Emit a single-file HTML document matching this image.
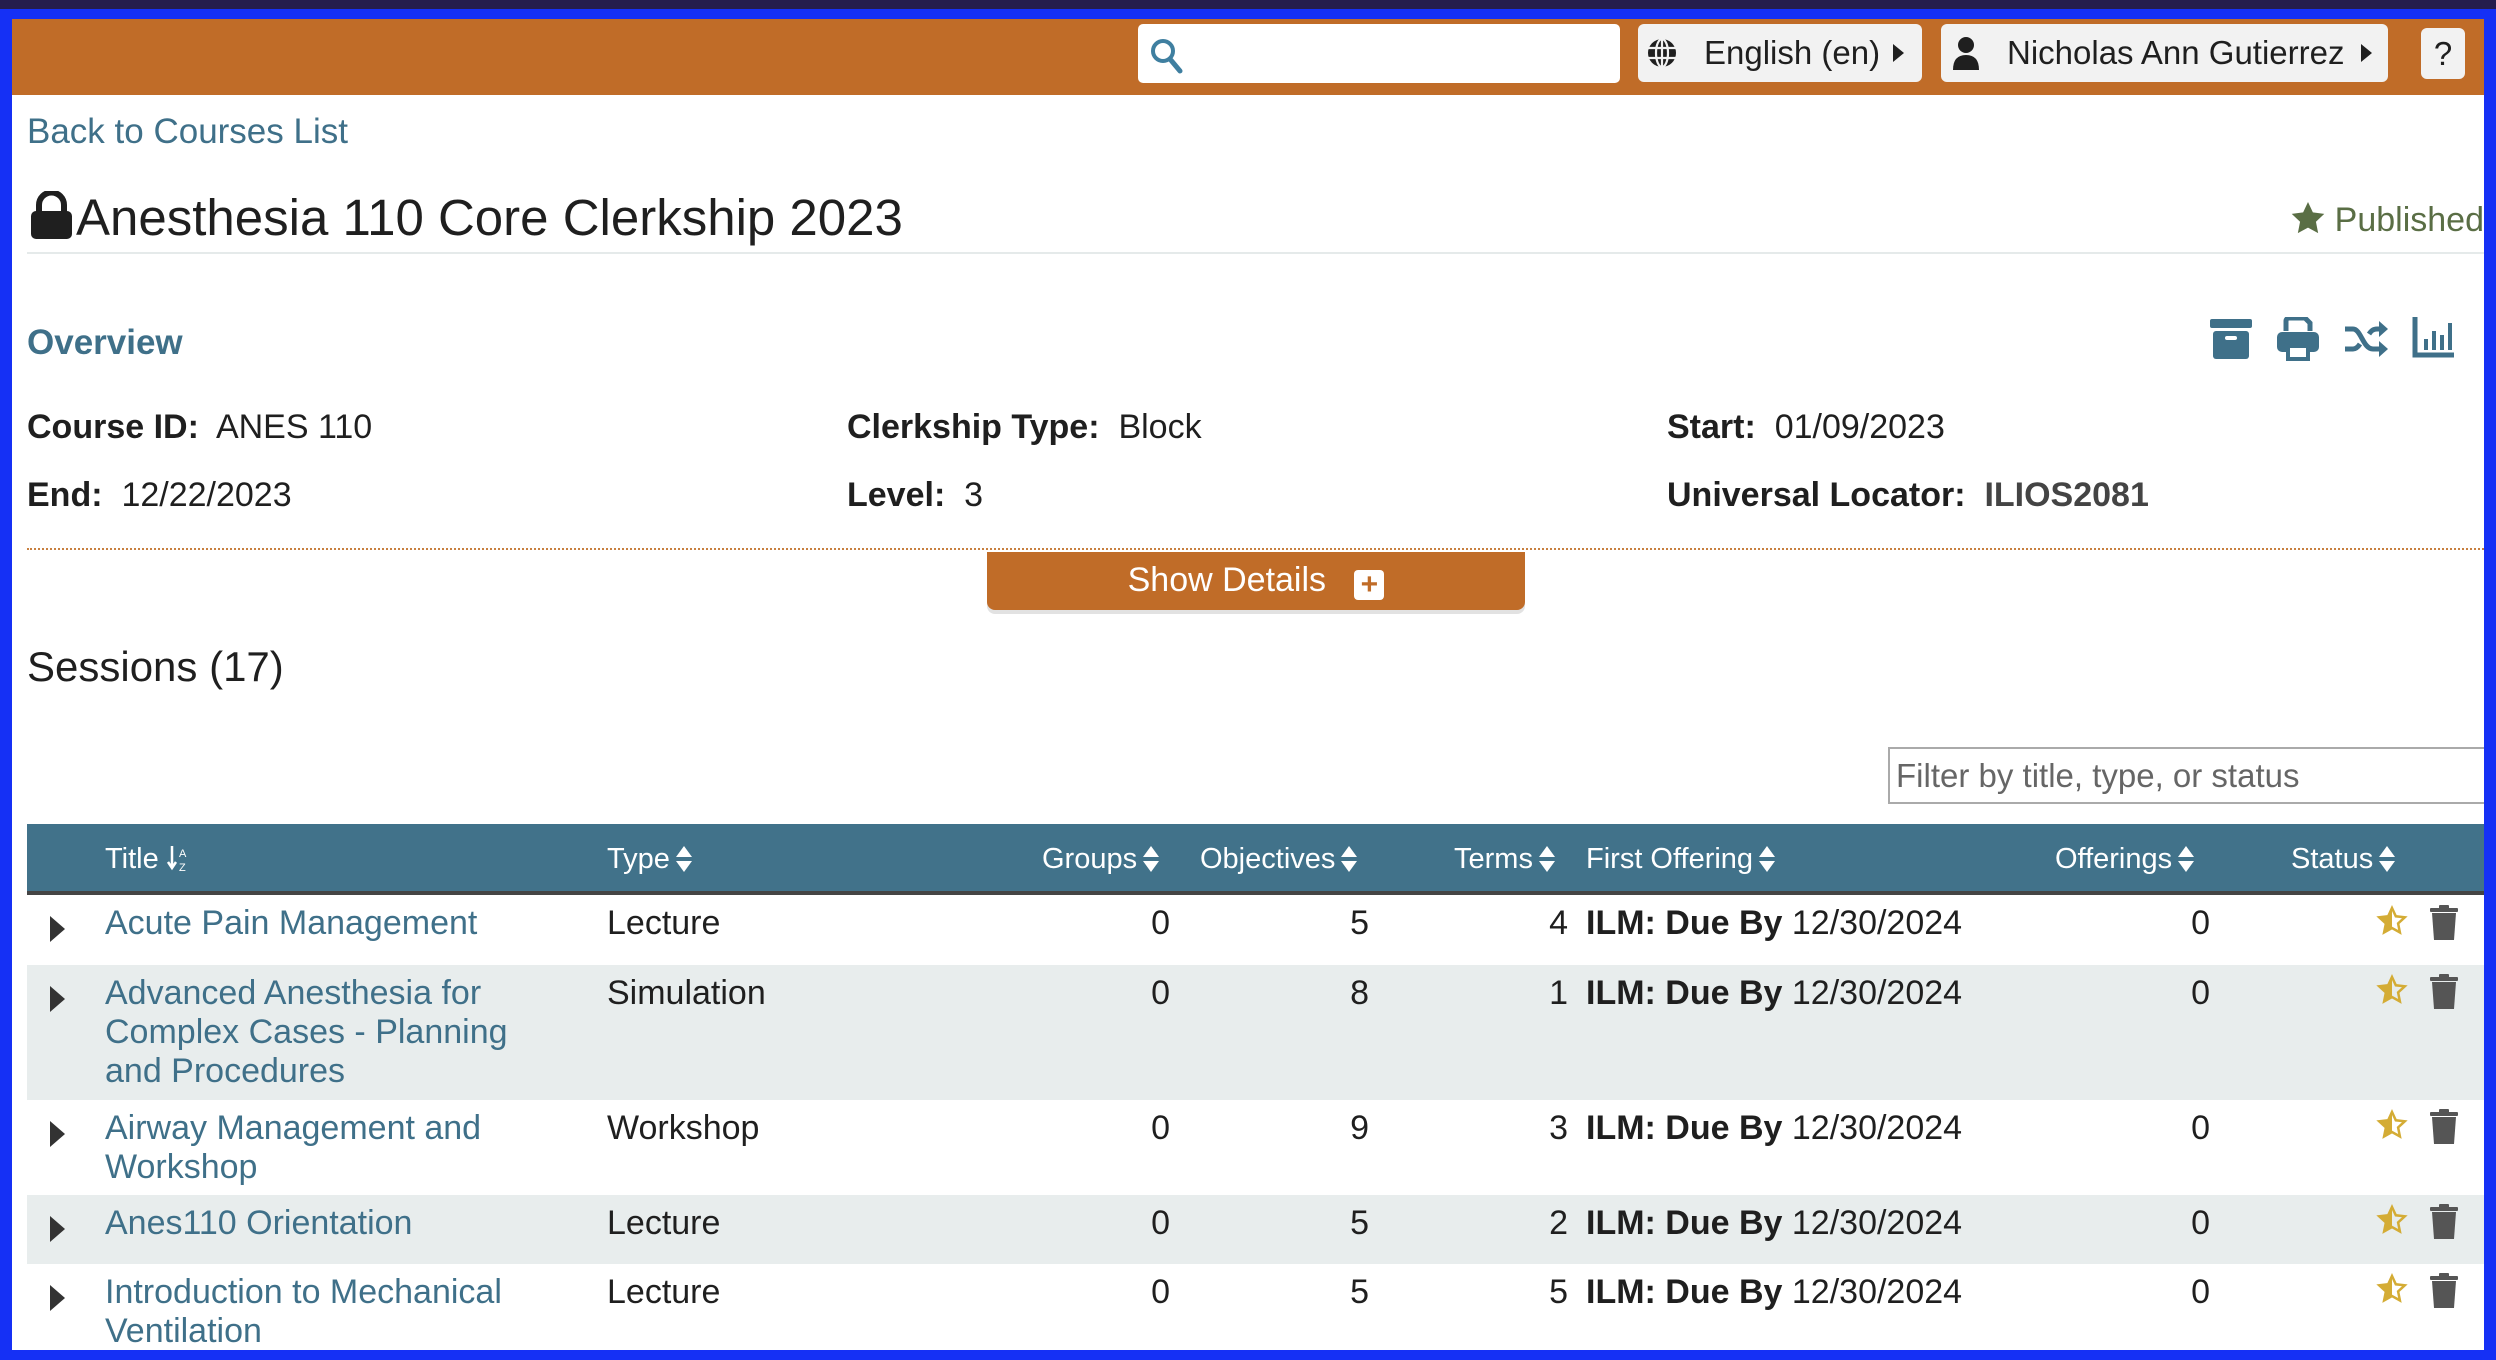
<!DOCTYPE html>
<html><head><meta charset="utf-8"><style>
*{box-sizing:border-box;margin:0;padding:0}
body{width:2496px;height:1360px;overflow:hidden;background:#1530f5;font-family:"Liberation Sans",sans-serif;color:#1f1f1f;position:relative}
.a{position:absolute}
#top{left:0;top:0;width:2496px;height:9px;background:#251d4d}
#page{left:12px;top:19px;width:2472px;height:1331px;background:#fff;overflow:hidden}
#hdr{left:0;top:0;width:2472px;height:76px;background:#c06c28}
.btn{background:#f2f2f2;border-radius:6px;height:58px;top:5px;font-size:33px;line-height:58px;color:#1f1f1f}
.teal{color:#3f7089}
.lbl{font-weight:bold}
.f{font-size:34px;line-height:40px}
.row{position:absolute;left:15px;width:2460px}
.cell{position:absolute;top:9px;font-size:34px;line-height:39px}
.r{text-align:right}
.tri{position:absolute;left:23px;top:21px;width:0;height:0;border-left:15px solid #333;border-top:13px solid transparent;border-bottom:13px solid transparent}
.hc{position:absolute;top:0;line-height:71px;font-size:29px;color:#fff}
.s{display:inline-block;width:16px;height:26px;vertical-align:-4px;margin-left:6px}
</style></head><body>
<svg width="0" height="0" style="position:absolute"><defs><symbol id="so" viewBox="0 0 16 26"><path d="M8 0l8 11H0zM8 26l8-11H0z" fill="#fff"/></symbol></defs></svg>
<div id="top" class="a"></div>
<div id="page" class="a">
 <div id="hdr" class="a">
  <div class="a" style="left:1126px;top:5px;width:482px;height:59px;background:#fff;border-radius:5px">
   <svg class="a" style="left:12px;top:14px" width="34" height="36" viewBox="0 0 34 36"><circle cx="13" cy="13" r="10" fill="none" stroke="#3f7fa0" stroke-width="4"/><line x1="20" y1="21" x2="30" y2="33" stroke="#3f7fa0" stroke-width="5" stroke-linecap="round"/></svg>
  </div>
  <div class="a btn" style="left:1626px;width:284px">
   <svg class="a" style="left:8px;top:13px" width="32" height="32" viewBox="0 0 32 32"><circle cx="16" cy="16" r="14" fill="#1f1f1f"/><g stroke="#f2f2f2" stroke-width="2.2" fill="none"><ellipse cx="16" cy="16" rx="6" ry="14"/><line x1="16" y1="2" x2="16" y2="30"/><line x1="2" y1="11" x2="30" y2="11"/><line x1="2" y1="21" x2="30" y2="21"/></g></svg>
   <span class="a" style="left:66px">English (en)</span>
   <span class="a" style="left:255px;top:20px;border-left:11px solid #1f1f1f;border-top:9px solid transparent;border-bottom:9px solid transparent"></span>
  </div>
  <div class="a btn" style="left:1929px;width:447px">
   <svg class="a" style="left:10px;top:12px" width="30" height="34" viewBox="0 0 30 34"><circle cx="15" cy="9" r="8" fill="#1f1f1f"/><path d="M2 34 Q2 19 15 19 Q28 19 28 34Z" fill="#1f1f1f"/></svg>
   <span class="a" style="left:66px">Nicholas Ann Gutierrez</span>
   <span class="a" style="left:420px;top:20px;border-left:11px solid #1f1f1f;border-top:9px solid transparent;border-bottom:9px solid transparent"></span>
  </div>
  <div class="a btn" style="left:2409px;top:9px;width:44px;height:51px;line-height:51px;text-align:center">?</div>
 </div>
 <div class="a teal f" style="left:15px;top:93px;font-size:35px">Back to Courses List</div>
 <svg class="a" style="left:17px;top:172px" width="45" height="48" viewBox="0 0 45 48"><path d="M10 22 V14 A12.5 12.5 0 0 1 35 14 V22" fill="none" stroke="#1f1f1f" stroke-width="6"/><rect x="2" y="20" width="41" height="28" rx="5" fill="#1f1f1f"/></svg>
 <div class="a" style="left:64px;top:170px;font-size:51px;line-height:58px">Anesthesia 110 Core Clerkship 2023</div>
 <div class="a" style="right:0;top:181px;font-size:34px;line-height:40px;color:#5a6e45">
  <svg width="34" height="32" viewBox="0 0 24 23" style="vertical-align:-3px"><path d="M12 0l3.5 7.5 8.2 1-6 5.7 1.6 8.2L12 18.4l-7.3 4 1.6-8.2-6-5.7 8.2-1z" fill="#5a6e45"/></svg> Published</div>
 <div class="a" style="left:15px;top:233px;width:2457px;height:2px;background:#e5eaea"></div>
 <div class="a teal f" style="left:15px;top:304px;font-weight:bold;font-size:35px">Overview</div>
 <svg class="a" style="left:2198px;top:300px" width="42" height="40" viewBox="0 0 42 40"><rect x="0" y="0" width="42" height="9" rx="2" fill="#3f7089"/><rect x="3" y="12" width="36" height="28" rx="3" fill="#3f7089"/><rect x="15" y="17" width="12" height="4" rx="2" fill="#fff"/></svg>
 <svg class="a" style="left:2265px;top:298px" width="42" height="44" viewBox="0 0 42 44"><path d="M9 14V4a3 3 0 0 1 3-3h16l5 5v8" fill="none" stroke="#3f7089" stroke-width="5"/><rect x="0" y="15" width="42" height="20" rx="5" fill="#3f7089"/><rect x="9" y="27" width="24" height="17" fill="#3f7089"/><rect x="13" y="31" width="16" height="9" fill="#fff"/></svg>
 <svg class="a" style="left:2333px;top:300px" width="44" height="40" viewBox="0 0 44 40"><path d="M0 10h8c8 0 10 20 20 20h8M0 30h8c3 0 5-2 7-5M24 15c2-3 4-5 8-5h4" fill="none" stroke="#3f7089" stroke-width="5"/><path d="M34 2l9 8-9 8zM34 22l9 8-9 8z" fill="#3f7089"/></svg>
 <svg class="a" style="left:2400px;top:298px" width="42" height="42" viewBox="0 0 42 42"><path d="M3 0v38h39" fill="none" stroke="#3f7089" stroke-width="5"/><rect x="12" y="22" width="4" height="11" fill="#3f7089"/><rect x="20" y="14" width="4" height="19" fill="#3f7089"/><rect x="28" y="18" width="4" height="15" fill="#3f7089"/><rect x="36" y="6" width="4" height="27" fill="#3f7089"/></svg>
 <div class="a f" style="left:15px;top:388px"><span class="lbl">Course ID:</span>&nbsp; ANES 110</div>
 <div class="a f" style="left:835px;top:388px"><span class="lbl">Clerkship Type:</span>&nbsp; Block</div>
 <div class="a f" style="left:1655px;top:388px"><span class="lbl">Start:</span>&nbsp; 01/09/2023</div>
 <div class="a f" style="left:15px;top:456px"><span class="lbl">End:</span>&nbsp; 12/22/2023</div>
 <div class="a f" style="left:835px;top:456px"><span class="lbl">Level:</span>&nbsp; 3</div>
 <div class="a f" style="left:1655px;top:456px"><span class="lbl">Universal Locator:</span>&nbsp; <b style="color:#444">ILIOS2081</b></div>
 <div class="a" style="left:15px;top:529px;width:2457px;border-top:2px dotted #c88040"></div>
 <div class="a" style="left:975px;top:533px;width:538px;height:58px;background:#c06c28;border-radius:0 0 8px 8px;box-shadow:0 4px 0 #e2e2e2;color:#fff;font-size:34px;line-height:56px;text-align:center">Show Details&nbsp;&nbsp; <span style="display:inline-block;width:30px;height:30px;background:#fff;border-radius:4px;color:#c06c28;font-weight:bold;line-height:30px;font-size:30px;vertical-align:-3px">+</span></div>
 <div class="a" style="left:15px;top:625px;font-size:42px;line-height:46px">Sessions (17)</div>
 <div class="a" style="left:1876px;top:728px;width:610px;height:57px;border:2px solid #aaa;font-size:33px;line-height:53px;padding-left:6px;color:#666">Filter by title, type, or status</div>
 <div class="a" style="left:15px;top:805px;width:2460px;height:71px;background:#41728a;border-bottom:4px solid #444"></div>
 <div class="hc" style="left:93px;top:805px">Title <svg width="24" height="26" viewBox="0 0 24 26" style="vertical-align:-4px"><path d="M5 0v20M1 16l4 6 4-6" stroke="#fff" stroke-width="2.5" fill="none"/><text x="12" y="11" font-size="11" fill="#fff" font-family="Liberation Sans">A</text><text x="12" y="25" font-size="11" fill="#fff" font-family="Liberation Sans">Z</text></svg></div>
 <div class="hc" style="left:595px;top:805px">Type<svg class="s"><use href="#so"/></svg></div>
 <div class="hc" style="left:1030px;top:805px">Groups<svg class="s"><use href="#so"/></svg></div>
 <div class="hc" style="left:1188px;top:805px">Objectives<svg class="s"><use href="#so"/></svg></div>
 <div class="hc" style="left:1442px;top:805px">Terms<svg class="s"><use href="#so"/></svg></div>
 <div class="hc" style="left:1574px;top:805px">First Offering<svg class="s"><use href="#so"/></svg></div>
 <div class="hc" style="left:2043px;top:805px">Offerings<svg class="s"><use href="#so"/></svg></div>
 <div class="hc" style="left:2279px;top:805px">Status<svg class="s"><use href="#so"/></svg></div>

 <div class="row" style="top:876px;height:70px;background:#fff"><div class="tri"></div>
  <div class="cell teal" style="left:78px">Acute Pain Management</div><div class="cell" style="left:580px">Lecture</div>
  <div class="cell r" style="left:1000px;width:143px">0</div><div class="cell r" style="left:1200px;width:142px">5</div><div class="cell r" style="left:1400px;width:141px">4</div>
  <div class="cell" style="left:1559px"><b>ILM: Due By</b> 12/30/2024</div><div class="cell r" style="left:2000px;width:183px">0</div></div>
 <div class="row" style="top:946px;height:135px;background:#e8eded"><div class="tri"></div>
  <div class="cell teal" style="left:78px">Advanced Anesthesia for<br>Complex Cases - Planning<br>and Procedures</div><div class="cell" style="left:580px">Simulation</div>
  <div class="cell r" style="left:1000px;width:143px">0</div><div class="cell r" style="left:1200px;width:142px">8</div><div class="cell r" style="left:1400px;width:141px">1</div>
  <div class="cell" style="left:1559px"><b>ILM: Due By</b> 12/30/2024</div><div class="cell r" style="left:2000px;width:183px">0</div></div>
 <div class="row" style="top:1081px;height:95px;background:#fff"><div class="tri"></div>
  <div class="cell teal" style="left:78px">Airway Management and<br>Workshop</div><div class="cell" style="left:580px">Workshop</div>
  <div class="cell r" style="left:1000px;width:143px">0</div><div class="cell r" style="left:1200px;width:142px">9</div><div class="cell r" style="left:1400px;width:141px">3</div>
  <div class="cell" style="left:1559px"><b>ILM: Due By</b> 12/30/2024</div><div class="cell r" style="left:2000px;width:183px">0</div></div>
 <div class="row" style="top:1176px;height:69px;background:#e8eded"><div class="tri"></div>
  <div class="cell teal" style="left:78px">Anes110 Orientation</div><div class="cell" style="left:580px">Lecture</div>
  <div class="cell r" style="left:1000px;width:143px">0</div><div class="cell r" style="left:1200px;width:142px">5</div><div class="cell r" style="left:1400px;width:141px">2</div>
  <div class="cell" style="left:1559px"><b>ILM: Due By</b> 12/30/2024</div><div class="cell r" style="left:2000px;width:183px">0</div></div>
 <div class="row" style="top:1245px;height:90px;background:#fff"><div class="tri"></div>
  <div class="cell teal" style="left:78px">Introduction to Mechanical<br>Ventilation</div><div class="cell" style="left:580px">Lecture</div>
  <div class="cell r" style="left:1000px;width:143px">0</div><div class="cell r" style="left:1200px;width:142px">5</div><div class="cell r" style="left:1400px;width:141px">5</div>
  <div class="cell" style="left:1559px"><b>ILM: Due By</b> 12/30/2024</div><div class="cell r" style="left:2000px;width:183px">0</div></div>
</div>
<svg class="a" style="left:0;top:0" width="2496" height="1360">
 <defs>
  <g id="st"><path d="M14 1l3.8 8.3 9 1-6.7 6.2 1.8 8.9L14 21l-7.9 4.4 1.8-8.9L1.2 10.3l9-1z" fill="none" stroke="#d4ac35" stroke-width="2.5"/><path d="M14 1l-3.8 8.3-9 1 6.7 6.2-1.8 8.9L14 21z" fill="#d4ac35"/></g>
  <g id="tr"><rect x="0" y="3" width="28" height="4" rx="1" fill="#555"/><rect x="9" y="0" width="10" height="4" rx="1" fill="#555"/><path d="M2 8h24l-2 27H4z" fill="#555"/></g>
 </defs>
 <use href="#st" x="2378" y="907"/><use href="#tr" x="2430" y="905"/>
 <use href="#st" x="2378" y="976"/><use href="#tr" x="2430" y="974"/>
 <use href="#st" x="2378" y="1111"/><use href="#tr" x="2430" y="1109"/>
 <use href="#st" x="2378" y="1206"/><use href="#tr" x="2430" y="1204"/>
 <use href="#st" x="2378" y="1275"/><use href="#tr" x="2430" y="1273"/>
</svg>
</body></html>
